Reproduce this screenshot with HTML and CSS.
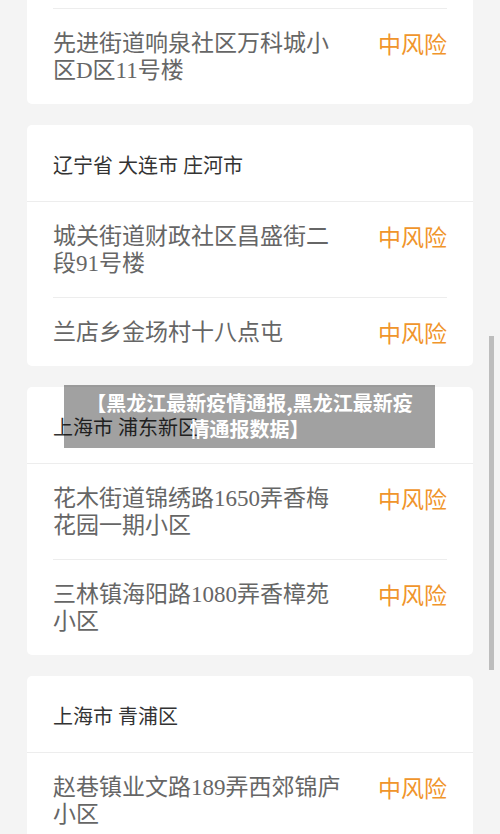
FILE: index.html
```html
<!DOCTYPE html>
<html>
<head>
	<meta charset="utf-8">
	<title>中风险地区</title>
	<link rel="stylesheet" href="styles.css">
</head>
<body>
	<div class="page">
		<div class="card card-first">
			<div class="item">
				<p class="place">先进街道响泉社区万科城小区D区11号楼</p>
				<span class="risk">中风险</span>
			</div>
		</div>
		<div class="card">
			<div class="city">辽宁省 大连市 庄河市</div>
			<div class="item">
				<p class="place">城关街道财政社区昌盛街二段91号楼</p>
				<span class="risk">中风险</span>
			</div>
			<div class="item">
				<p class="place">兰店乡金场村十八点屯</p>
				<span class="risk">中风险</span>
			</div>
		</div>
		<div class="card">
			<div class="city">上海市 浦东新区</div>
			<div class="item">
				<p class="place">花木街道锦绣路1650弄香梅花园一期小区</p>
				<span class="risk">中风险</span>
			</div>
			<div class="item">
				<p class="place">三林镇海阳路1080弄香樟苑小区</p>
				<span class="risk">中风险</span>
			</div>
		</div>
		<div class="card">
			<div class="city">上海市 青浦区</div>
			<div class="item">
				<p class="place">赵巷镇业文路189弄西郊锦庐小区</p>
				<span class="risk">中风险</span>
			</div>
		</div>
	</div>
	<div class="caption">【黑龙江最新疫情通报,黑龙江最新疫情通报数据】</div>
	<div class="scroll-thumb"></div>
</body>
</html>
```

FILE: styles.css
```css
html, body {
	height: 834px;
	overflow: hidden;
}
body {
	margin: 0;
	background-color: #f4f4f4;
	font-family: "Liberation Serif", "Noto Sans CJK SC", serif;
	position: relative;
}
.page {
	padding: 0 27px;
}
.card {
	background-color: #fff;
	border-radius: 5px;
	margin-bottom: 21px;
}
.card-first {
	margin-top: -20px;
	padding-top: 28px;
}
.card-first .item:first-child {
	border-top: 1px solid #ededed;
}
.city {
	height: 48px;
	padding-top: 28px;
	line-height: 27px;
	padding-left: 26px;
	font-size: 20px;
	color: #333;
	border-bottom: 1px solid #ededed;
}
.item {
	display: flex;
	justify-content: space-between;
	align-items: flex-start;
	margin: 0 26px;
	padding: 21px 0 20px;
	border-top: 1px solid #ededed;
}
.city + .item {
	border-top: none;
}
.place {
	margin: 0;
	width: 292px;
	font-size: 23px;
	line-height: 27px;
	color: #666;
}
.risk {
	font-family: "Noto Sans CJK SC", sans-serif;
	font-size: 23px;
	line-height: 27px;
	color: #f0952b;
}
.caption {
	position: absolute;
	left: 64px;
	top: 385px;
	width: 339px;
	height: 52px;
	padding: 5px 16px 6px;
	background-color: rgba(0, 0, 0, 0.37);
	color: #fff;
	font-family: "Noto Sans CJK SC", sans-serif;
	font-weight: bold;
	font-size: 20px;
	line-height: 26px;
	text-align: center;
}
.scroll-thumb {
	position: absolute;
	left: 489px;
	top: 336px;
	width: 5px;
	height: 334px;
	background-color: #bdbdbd;
}
```
